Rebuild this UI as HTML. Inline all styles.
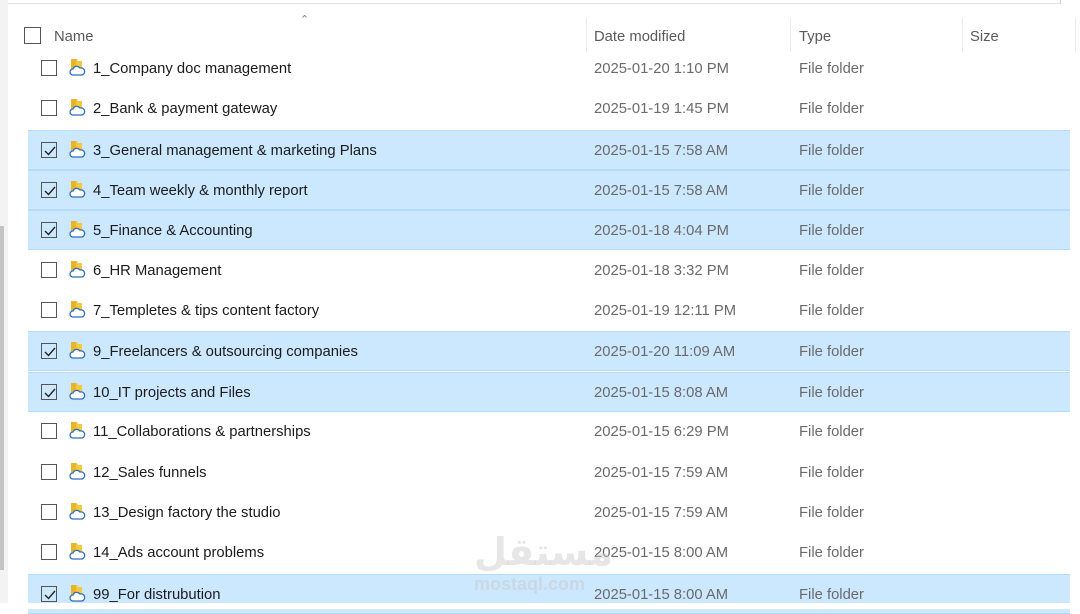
<!DOCTYPE html>
<html><head><meta charset="utf-8"><style>
*{margin:0;padding:0;box-sizing:border-box}
body{width:1080px;height:609px;background:#fff;position:relative;overflow:hidden;font-family:"Liberation Sans","DejaVu Sans",sans-serif;font-size:14.8px;color:#1b1b1b}
.abs{position:absolute}
.row{position:absolute;left:28px;width:1042px;height:40px}
.sel{background:#cce8ff;border-top:1px solid #b5dcff;border-bottom:1px solid #b5dcff}
.cb{position:absolute;left:13px;top:11px;width:16px;height:16px;border:1px solid #555;background:#fff}
.sel .cb{background:transparent}
.cb svg{position:absolute;left:1px;top:1px}
.ic{position:absolute;left:40px;top:9px}
.nm{position:absolute;left:65px;top:12px;white-space:nowrap}
.dt{position:absolute;left:566px;top:12px;color:#6a6a6a;white-space:nowrap}
.ty{position:absolute;left:771px;top:12px;color:#6a6a6a}
.hd{position:absolute;top:29px;color:#5a5a5a;font-size:14.8px}
.sep{position:absolute;top:18px;width:1px;height:34px;background:#ececec}
</style></head><body>
<div class="abs" style="left:0;top:3px;width:1060px;height:1px;background:#e3e3e3"></div>
<div class="abs" style="left:1060px;top:0;width:1px;height:4px;background:#d0d0d0"></div>
<div class="abs" style="left:0;top:0;width:8px;height:609px;background:#f3f3f3"></div>
<div class="abs" style="left:0;top:226px;width:4px;height:344px;background:#c4c4c4"></div>

<div class="abs" style="left:24px;top:27px;width:17px;height:17px;border:1px solid #555"></div>
<div class="hd" style="left:54px">Name</div>
<div class="abs" style="left:300px;top:13px;color:#888;font-size:11px">&#8963;</div>
<div class="sep" style="left:586px"></div>
<div class="hd" style="left:594px">Date modified</div>
<div class="sep" style="left:790px"></div>
<div class="hd" style="left:799px">Type</div>
<div class="sep" style="left:962px"></div>
<div class="hd" style="left:970px">Size</div>
<div class="sep" style="left:1075px"></div>

<div id="rows"></div>

<div class="abs" style="left:474px;top:530px;font-family:'DejaVu Sans',sans-serif;font-size:38px;font-weight:bold;color:rgba(200,200,200,0.45);direction:rtl">مستقل</div>
<div class="abs" style="left:474px;top:574px;font-size:18px;font-weight:bold;color:rgba(200,200,200,0.5)">mostaql.com</div>
<div class="abs" style="left:0;top:603px;width:1080px;height:6px;background:#fff"></div>

<script>
var d=[["1_Company doc management","2025-01-20 1:10 PM",0],["2_Bank & payment gateway","2025-01-19 1:45 PM",0],["3_General management & marketing Plans","2025-01-15 7:58 AM",1],["4_Team weekly & monthly report","2025-01-15 7:58 AM",1],["5_Finance & Accounting","2025-01-18 4:04 PM",1],["6_HR Management","2025-01-18 3:32 PM",0],["7_Templetes & tips content factory","2025-01-19 12:11 PM",0],["9_Freelancers & outsourcing companies","2025-01-20 11:09 AM",1],["10_IT projects and Files","2025-01-15 8:08 AM",1],["11_Collaborations & partnerships","2025-01-15 6:29 PM",0],["12_Sales funnels","2025-01-15 7:59 AM",0],["13_Design factory the studio","2025-01-15 7:59 AM",0],["14_Ads account problems","2025-01-15 8:00 AM",0],["99_For distrubution","2025-01-15 8:00 AM",1]];
var ic='<svg class="ic" width="20" height="20" viewBox="0 0 20 20"><path d="M3 1h6l1 2h4v8H3z" fill="#f5c842"/><path d="M3 1h5v10H3z" fill="#e8b528"/><path d="M5 17a3 3 0 0 1 0-6 4 4 0 0 1 7-1 3 3 0 0 1 2 7z" fill="#fff" stroke="#2d6fbf" stroke-width="1.3"/></svg>';
var chk='<svg width="14" height="14" viewBox="0 0 14 14"><path d="M2 7l3.5 3.5L12 3" fill="none" stroke="#222" stroke-width="1.4"/></svg>';
var h='';
d.forEach(function(r,i){var t=Math.round(49+40.35*i);
h+='<div class="row'+(r[2]?' sel':'')+'" style="top:'+t+'px"><div class="cb">'+(r[2]?chk:'')+'</div>'+ic+'<div class="nm">'+r[0].replace(/&/g,'&amp;')+'</div><div class="dt">'+r[1]+'</div><div class="ty">File folder</div></div>';});
document.getElementById('rows').innerHTML=h;
</script>
</body></html>
